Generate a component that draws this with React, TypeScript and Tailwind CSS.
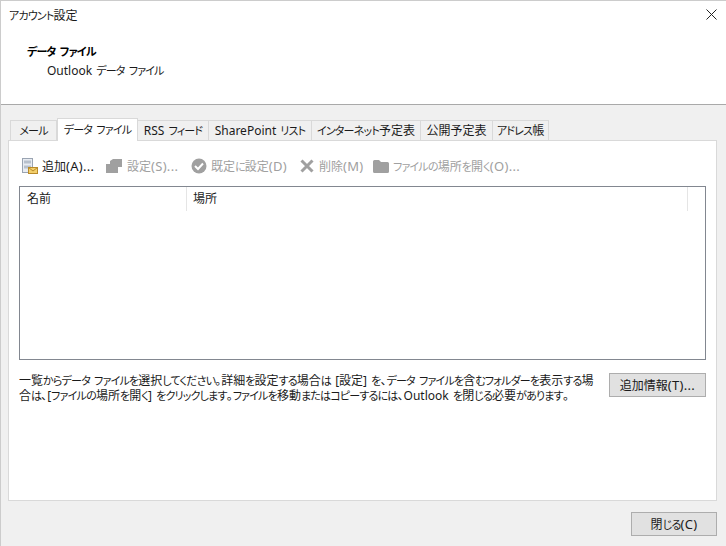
function T({ s }: { s: string }) {
  const parts = s.split(/([\u3040-\u30FF]+|\([A-Z]\)(?:\.\.\.)?)/);
  return (
    <>
      {parts.map((p, i) =>
        /[\u3040-\u30FF]/.test(p) ? (
          <span key={i} className="text-[11px] tracking-[-0.8px]">{p}</span>
        ) : /^\(/.test(p) ? (
          <span key={i} className="text-[13px] tracking-[0.3px]">{p}</span>
        ) : (
          <span key={i}>{p}</span>
        )
      )}
    </>
  );
}

export default function App() {
  const font = "[font-family:'Noto_Sans','Noto_Sans_CJK_JP',sans-serif] [font-feature-settings:'palt'] [word-spacing:1px]";
  const tabs: [string, number, boolean?][] = [
    ["メール", 47],
    ["データ ファイル", 81, true],
    ["RSS フィード", 71],
    ["SharePoint リスト", 103],
    ["インターネット予定表", 109],
    ["公開予定表", 72],
    ["アドレス帳", 56],
  ];
  return (
    <div className={`${font} w-[726px] h-[546px] flex flex-col bg-[#f0f0f0] border border-r-0 border-b-0 border-[#cccccc] text-[12px] leading-[16px] text-[#1a1a1a] overflow-hidden`}>
      <div className="h-[104px] bg-white border-b border-[#a9a9a9] flex flex-col shrink-0">
        <div className="flex justify-between pl-2 pr-[9px] pt-[7px] h-[26px]">
          <span><T s="アカウント設定" /></span>
          <svg width="11" height="11" viewBox="0 0 11 11" className="mt-[1px]"><path d="M0.5 0.5L10.5 10.5M10.5 0.5L0.5 10.5" stroke="#222" strokeWidth="1" fill="none" /></svg>
        </div>
        <div className="pl-[26px] pt-[17px] font-bold text-black"><T s="データ ファイル" /></div>
        <div className="pl-[46px] pt-[3px]"><T s="Outlook データ ファイル" /></div>
      </div>
      <div className="flex-1 flex flex-col pl-[7px] pr-[9px] min-h-0">
        <div className="flex items-end h-[35px] pl-[2px] shrink-0 relative z-10">
          {tabs.map(([t, w, active]) => (
            <div
              key={t}
              style={{ width: w }}
              className={active
                ? "h-[23px] -mb-px bg-white border border-b-0 border-[#d9d9d9] flex items-center justify-center whitespace-pre"
                : "h-[20px] bg-[#f0f0f0] border border-b-0 border-l-0 first:border-l border-[#d9d9d9] flex items-center justify-center whitespace-pre"}
            >
              <span><T s={t} /></span>
            </div>
          ))}
        </div>
        <div className="h-[361px] shrink-0 bg-white border border-[#d9d9d9] px-[10px] flex flex-col">
          <div className="h-[45px] flex items-center pt-[5px] text-[#a0a0a0] whitespace-nowrap shrink-0">
            <div className="flex items-center gap-[4px] text-[#1a1a1a] ml-[3px] w-[84px]">
              <svg width="16" height="16" viewBox="0 0 16 16">
                <rect x="0.5" y="0.5" width="10" height="14" fill="#e8ecf2" stroke="#9aa4b2" />
                <rect x="2" y="2.5" width="7" height="3" fill="#b7c0cc" />
                <rect x="2" y="7.5" width="7" height="3" fill="#b7c0cc" />
                <rect x="6.5" y="9.5" width="9" height="6" fill="#f3cf6b" stroke="#b98a2a" />
                <path d="M6.5 9.5L11 13L15.5 9.5" fill="none" stroke="#b98a2a" />
              </svg>
              <span><T s="追加(A)..." /></span>
            </div>
            <div className="flex items-center gap-[5px] w-[85px]">
              <svg width="16" height="14" viewBox="0 0 16 14"><path d="M0 5L4 5L4 2L7 0L16 0L16 8L12 8L12 14L0 14Z" fill="#a0a0a0" /></svg>
              <span><T s="設定(S)..." /></span>
            </div>
            <div className="flex items-center gap-[4px] w-[109px]">
              <svg width="16" height="16" viewBox="0 0 16 16"><circle cx="8" cy="8" r="7.5" fill="#a0a0a0" /><path d="M4 8L7 11L12 5.5" fill="none" stroke="#fff" strokeWidth="2" /></svg>
              <span><T s="既定に設定(D)" /></span>
            </div>
            <div className="flex items-center gap-[5px] w-[73px]">
              <svg width="14" height="14" viewBox="0 0 14 14"><path d="M1.5 1.5L12.5 12.5M12.5 1.5L1.5 12.5" stroke="#a0a0a0" strokeWidth="3" fill="none" /></svg>
              <span><T s="削除(M)" /></span>
            </div>
            <div className="flex items-center gap-[4px]">
              <svg width="16" height="13" viewBox="0 0 16 13"><path d="M1.5 0H6L8 2H14.5Q16 2 16 3.5V11.5Q16 13 14.5 13H1.5Q0 13 0 11.5V1.5Q0 0 1.5 0Z" fill="#a0a0a0" /></svg>
              <span><T s="ファイルの場所を開く(O)..." /></span>
            </div>
          </div>
          <div className="h-[174px] shrink-0 border border-[#828790] bg-white">
            <div className="flex h-[24px] items-center">
              <div className="w-[167px] h-full pl-[7px] flex items-center border-r border-[#e5e5e5]">名前</div>
              <div className="w-[501px] h-full pl-[6px] flex items-center border-r border-[#e5e5e5]">場所</div>
            </div>
          </div>
          <div className="flex justify-between mt-[13px]">
            <p className="whitespace-nowrap leading-[15px]">
              <T s="一覧からデータ ファイルを選択してください。詳細を設定する場合は [設定] を、データ ファイルを含むフォルダーを表示する場" />
              <br />
              <T s="合は、[ファイルの場所を開く] をクリックします。ファイルを移動またはコピーするには、Outlook を閉じる必要があります。" />
            </p>
            <button className="w-[97px] h-[24px] bg-[#e1e1e1] border border-[#adadad] shrink-0 whitespace-nowrap"><T s="追加情報(T)..." /></button>
          </div>
        </div>
        <div className="flex-1 flex justify-end items-start pt-[11px]">
          <button className="w-[86px] h-[24px] bg-[#e1e1e1] border border-[#adadad]"><T s="閉じる(C)" /></button>
        </div>
      </div>
    </div>
  );
}
